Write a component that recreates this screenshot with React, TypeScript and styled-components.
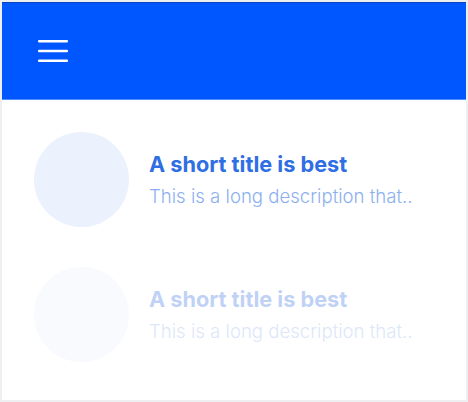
import React from "react";
import styled, { createGlobalStyle } from "styled-components";

const Global = createGlobalStyle`
  html, body { margin: 0; padding: 0; background: #eeeff1; }
  body { font-family: Inter, "Noto Sans", sans-serif; }
  * { box-sizing: border-box; }
`;

const Frame = styled.div`
  width: 468px;
  height: 402px;
  padding: 2px;
  background: #eeeff1;
`;

const Panel = styled.div`
  height: 398px;
  background: #ffffff;
  display: flex;
  flex-direction: column;
  overflow: hidden;
`;

const Header = styled.header`
  height: 98px;
  flex: none;
  background: #0057ff;
  border-top: 1px solid #0a43c4;
  border-bottom: 1px solid #4f8dff;
  display: flex;
  align-items: center;
  padding-left: 34px;
`;

const MenuButton = styled.button`
  width: 34px;
  height: 34px;
  padding: 0;
  border: none;
  background: transparent;
  display: flex;
  align-items: center;
  justify-content: center;
  cursor: pointer;
`;

const List = styled.ul`
  list-style: none;
  margin: 0;
  padding: 32px 32px 0 32px;
  display: flex;
  flex-direction: column;
  gap: 40px;
`;

const Item = styled.li<{ $faded?: boolean }>`
  display: flex;
  align-items: center;
  gap: 20px;
  opacity: ${(p) => (p.$faded ? 0.3 : 1)};
`;

const Avatar = styled.div`
  width: 95px;
  height: 95px;
  border-radius: 50%;
  background: #ebf1fd;
  flex: none;
`;

const Texts = styled.div`
  display: flex;
  flex-direction: column;
  gap: 6px;
`;

const Title = styled.h3`
  margin: 0;
  font-size: 21.7px;
  line-height: 26px;
  font-weight: 700;
  color: #2f6ee3;
`;

const Description = styled.p`
  margin: 0;
  font-size: 18.6px;
  line-height: 26px;
  font-weight: 300;
  color: #8cb0ef;
`;

const MenuIcon = () => (
  <svg width="30" height="22" viewBox="0 0 30 22" fill="none">
    <rect x="0" y="0" width="30" height="2.4" rx="1" fill="#fff" />
    <rect x="0" y="9.8" width="30" height="2.4" rx="1" fill="#fff" />
    <rect x="0" y="19.6" width="30" height="2.4" rx="1" fill="#fff" />
  </svg>
);

const items = [
  { title: "A short title is best", desc: "This is a long description that..", faded: false },
  { title: "A short title is best", desc: "This is a long description that..", faded: true },
];

export default function App() {
  return (
    <>
      <Global />
      <Frame>
        <Panel>
          <Header>
            <MenuButton aria-label="Menu">
              <MenuIcon />
            </MenuButton>
          </Header>
          <List>
            {items.map((it, i) => (
              <Item key={i} $faded={it.faded}>
                <Avatar />
                <Texts>
                  <Title>{it.title}</Title>
                  <Description>{it.desc}</Description>
                </Texts>
              </Item>
            ))}
          </List>
        </Panel>
      </Frame>
    </>
  );
}
